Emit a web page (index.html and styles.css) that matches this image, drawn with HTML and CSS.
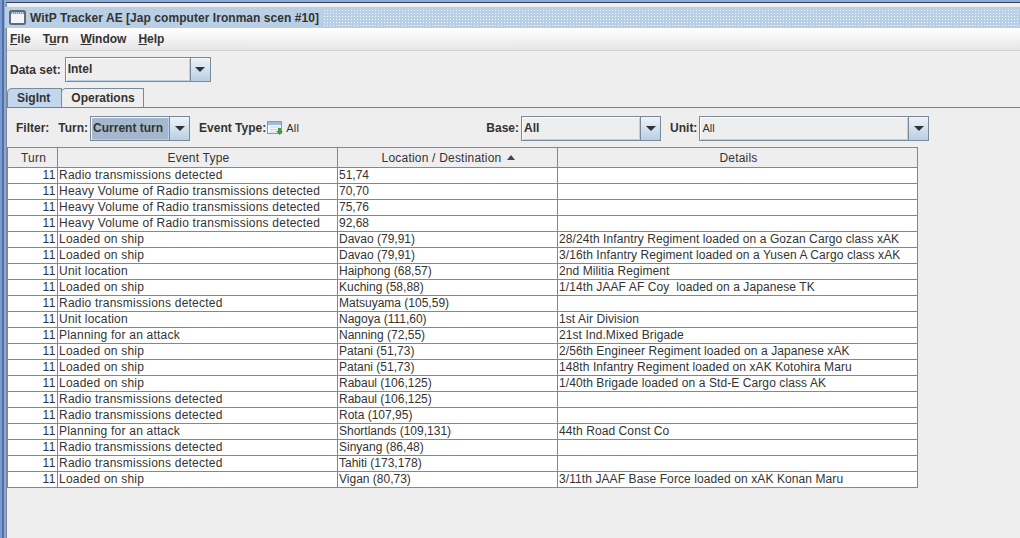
FILE: index.html
```html
<!DOCTYPE html>
<html lang="en">
<head>
    <meta charset="UTF-8">
    <title>WitP Tracker AE</title>
    <link rel="stylesheet" href="styles.css">
</head>
<body>

<div class="window">
    <div class="titlebar">
        <svg class="title-icon" width="17" height="15" viewBox="0 0 17 15">
            <rect x="1" y="1" width="15" height="13" rx="1.500" fill="#f2f4f8" stroke="#5d6b7d" stroke-width="2"/>
            <rect x="2" y="2" width="13" height="2" fill="#8a9ab0"/>
            <path d="M3 3h1M5 3h1M7 3h1M9 3h1M11 3h1M13 3h1" stroke="#fff"/>
        </svg>
        <span class="title-text">WitP Tracker AE [Jap computer Ironman scen #10]</span>
        <div class="title-dots"></div>
    </div>

    <div class="menubar">
        <span class="menu"><u>F</u>ile</span>
        <span class="menu">T<u>u</u>rn</span>
        <span class="menu"><u>W</u>indow</span>
        <span class="menu"><u>H</u>elp</span>
    </div>

    <div class="dataset">
        <span class="label">Data set:</span>
        <div class="combo combo-dataset">
            <div class="combo-value">Intel</div>
            <div class="combo-btn"><i class="arrow"></i></div>
        </div>
    </div>

    <div class="tabs">
        <div class="tab tab-active">SigInt</div>
        <div class="tab">Operations</div>
    </div>

    <div class="panel">
        <div class="filters">
            <span class="label label-filter">Filter:</span>
            <span class="label label-turn">Turn:</span>
            <div class="combo combo-turn">
                <div class="combo-value combo-selected">Current turn</div>
                <div class="combo-btn"><i class="arrow"></i></div>
            </div>
            <span class="label label-event">Event Type:</span>
            <svg class="event-icon" width="16" height="15" viewBox="0 0 16 15">
                <rect x="0.500" y="0.500" width="14" height="12" fill="#f4f8fc" stroke="#7d9cc0"/>
                <rect x="1" y="1" width="13" height="3" fill="#9dbbdc"/>
                <path d="M3 6h10M3 8.500h10M3 11h6" stroke="#c5d5e6"/>
                <path d="M11 7h3v3h2l-3.500 4-3.500-4h2z" fill="#3f9a3f"/>
            </svg>
            <span class="event-all">All</span>
            <span class="label label-base">Base:</span>
            <div class="combo combo-base">
                <div class="combo-value">All</div>
                <div class="combo-btn"><i class="arrow"></i></div>
            </div>
            <span class="label label-unit">Unit:</span>
            <div class="combo combo-unit">
                <div class="combo-value combo-plain">All</div>
                <div class="combo-btn"><i class="arrow"></i></div>
            </div>
        </div>

        <table class="grid">
            <colgroup>
                <col class="col-turn">
                <col class="col-type">
                <col class="col-loc">
                <col class="col-details">
            </colgroup>
            <thead>
                <tr>
                    <th>Turn</th>
                    <th>Event Type</th>
                    <th>Location / Destination<i class="sort"></i></th>
                    <th>Details</th>
                </tr>
            </thead>
            <tbody>
                <tr><td class="num">11</td><td class="type">Radio transmissions detected</td><td>51,74</td><td class="info"></td></tr>
                <tr><td class="num">11</td><td class="type">Heavy Volume of Radio transmissions detected</td><td>70,70</td><td class="info"></td></tr>
                <tr><td class="num">11</td><td class="type">Heavy Volume of Radio transmissions detected</td><td>75,76</td><td class="info"></td></tr>
                <tr><td class="num">11</td><td class="type">Heavy Volume of Radio transmissions detected</td><td>92,68</td><td class="info"></td></tr>
                <tr><td class="num">11</td><td class="type">Loaded on ship</td><td>Davao (79,91)</td><td class="info">28/24th Infantry Regiment loaded on a Gozan Cargo class xAK</td></tr>
                <tr><td class="num">11</td><td class="type">Loaded on ship</td><td>Davao (79,91)</td><td class="info">3/16th Infantry Regiment loaded on a Yusen A Cargo class xAK</td></tr>
                <tr><td class="num">11</td><td class="type">Unit location</td><td>Haiphong (68,57)</td><td class="info">2nd Militia Regiment</td></tr>
                <tr><td class="num">11</td><td class="type">Loaded on ship</td><td>Kuching (58,88)</td><td class="info">1/14th JAAF AF Coy  loaded on a Japanese TK</td></tr>
                <tr><td class="num">11</td><td class="type">Radio transmissions detected</td><td>Matsuyama (105,59)</td><td class="info"></td></tr>
                <tr><td class="num">11</td><td class="type">Unit location</td><td>Nagoya (111,60)</td><td class="info">1st Air Division</td></tr>
                <tr><td class="num">11</td><td class="type">Planning for an attack</td><td>Nanning (72,55)</td><td class="info">21st Ind.Mixed Brigade</td></tr>
                <tr><td class="num">11</td><td class="type">Loaded on ship</td><td>Patani (51,73)</td><td class="info">2/56th Engineer Regiment loaded on a Japanese xAK</td></tr>
                <tr><td class="num">11</td><td class="type">Loaded on ship</td><td>Patani (51,73)</td><td class="info">148th Infantry Regiment loaded on xAK Kotohira Maru</td></tr>
                <tr><td class="num">11</td><td class="type">Loaded on ship</td><td>Rabaul (106,125)</td><td class="info">1/40th Brigade loaded on a Std-E Cargo class AK</td></tr>
                <tr><td class="num">11</td><td class="type">Radio transmissions detected</td><td>Rabaul (106,125)</td><td class="info"></td></tr>
                <tr><td class="num">11</td><td class="type">Radio transmissions detected</td><td>Rota (107,95)</td><td class="info"></td></tr>
                <tr><td class="num">11</td><td class="type">Planning for an attack</td><td>Shortlands (109,131)</td><td class="info">44th Road Const Co</td></tr>
                <tr><td class="num">11</td><td class="type">Radio transmissions detected</td><td>Sinyang (86,48)</td><td class="info"></td></tr>
                <tr><td class="num">11</td><td class="type">Radio transmissions detected</td><td>Tahiti (173,178)</td><td class="info"></td></tr>
                <tr><td class="num">11</td><td class="type">Loaded on ship</td><td>Vigan (80,73)</td><td class="info">3/11th JAAF Base Force loaded on xAK Konan Maru</td></tr>
            </tbody>
        </table>
    </div>
</div>

</body>
</html>
```
FILE: styles.css
```css
html, body {
    margin: 0;
    padding: 0;
}
body {
    width: 1020px;
    height: 538px;
    overflow: hidden;
    font-family: "Liberation Sans", Arial, sans-serif;
    font-size: 12px;
    color: #333;
    background: linear-gradient(90deg, #7a9bd0 2px, #4f6fa8 2px, #4f6fa8 4px, #8fa8cf 4px);
}
.window {
    height: 536px;
    display: flex;
    flex-direction: column;
    margin-top: 2px;
    margin-left: 6px;
    background-color: #eeeeee;
    border-top: 1px solid #2f4468;
    border-left: 1px solid #7a8a99;
}
.titlebar {
    height: 21px;
    margin-top: 4px;
    display: flex;
    align-items: center;
    background-color: #b8cfe5;
    margin-left: -2px;
    padding-left: 4px;
}
.title-icon {
    flex: none;
}
.title-text {
    margin-left: 4px;
    font-weight: bold;
    letter-spacing: 0.050px;
    white-space: nowrap;
    color: #333;
}
.title-dots {
    flex: 1;
    height: 17px;
    margin-left: 4px;
    background-image: radial-gradient(#f2f6fa 35%, transparent 40%);
    background-size: 3px 3px;
}
.menubar {
    height: 22px;
    display: flex;
    align-items: center;
    gap: 13px;
    padding-left: 3px;
    font-weight: bold;
    background: linear-gradient(#ffffff, #e6e6e6);
    border-bottom: 1px solid #cfcfcf;
}
.menu {
    margin-right: -1px;
}
.dataset {
    height: 37px;
    display: flex;
    align-items: center;
    gap: 4px;
    padding-left: 3px;
}
.label {
    font-weight: bold;
    white-space: nowrap;
}
.combo {
    height: 25px;
    display: flex;
    box-sizing: border-box;
    border: 1px solid #7a8a99;
    background-color: #eeeeee;
}
.combo-value {
    flex: 1;
    padding-left: 2px;
    line-height: 23px;
    font-weight: bold;
    box-shadow: inset 1px 1px 0 #fff, inset -1px -1px 0 #b8cfe5;
}
.combo-selected {
    background-color: #a3b8cc;
}
.combo-plain {
    font-weight: normal;
    font-size: 11px;
}
.combo-btn {
    width: 19px;
    display: flex;
    align-items: center;
    justify-content: center;
    border-left: 1px solid #7a8a99;
    background: linear-gradient(#eef3f8, #b8cfe5);
}
.arrow {
    width: 0;
    height: 0;
    border-left: 5px solid transparent;
    border-right: 5px solid transparent;
    border-top: 5px solid #333;
}
.combo-dataset { width: 146px; }
.combo-turn { width: 100px; }
.combo-base { width: 140px; }
.combo-unit { width: 230px; }
.tabs {
    height: 19px;
    display: flex;
    font-weight: bold;
}
.tab {
    padding: 0 8px 0 9px;
    line-height: 18px;
    background-color: #eeeeee;
    border: 1px solid #7a8a99;
    border-bottom: none;
    border-radius: 5px 0 0 0;
    margin-right: -1px;
}
.tab-active {
    padding: 0 11px 0 9px;
    background-color: #c3d7ec;
    height: 19px;
}
.panel {
    flex: 1;
    border-top: 1px solid #6382bf;
    padding-top: 1px;
}
.filters {
    height: 38px;
    display: flex;
    align-items: center;
}
.label-filter { margin-left: 9px; }
.label-turn { margin-left: 9px; margin-right: 2px; }
.label-event { margin-left: 9px; margin-right: 1px; }
.event-icon { flex: none; }
.event-all { margin-left: 3px; font-size: 11px; letter-spacing: 0.300px; }
.label-base { margin-left: 187px; margin-right: 2px; }
.label-unit { margin-left: 9px; margin-right: 2px; }
.grid {
    table-layout: fixed;
    width: 911px;
    border-collapse: collapse;
    font-size: 12px;
    background-color: #fff;
}
.col-turn { width: 50px; }
.col-type { width: 280px; }
.col-loc { width: 220px; }
.col-details { width: 360px; }
.grid th {
    height: 19px;
    padding: 0 0 0 2px;
    font-weight: normal;
    letter-spacing: 0.200px;
    background-color: #eeeeee;
    border: 1px solid #7a8a99;
}
.grid td {
    height: 15px;
    padding: 0 0 0 1px;
    line-height: 15px;
    white-space: pre;
    overflow: hidden;
    border: 1px solid #7a8a99;
}
.grid td.num {
    text-align: right;
    padding-right: 1px;
    letter-spacing: 0.500px;
}
.grid td.type {
    letter-spacing: 0.220px;
}
.grid td.info {
    letter-spacing: 0.090px;
}
.sort {
    display: inline-block;
    width: 0;
    height: 0;
    margin-left: 6px;
    vertical-align: 2px;
    border-left: 4px solid transparent;
    border-right: 4px solid transparent;
    border-bottom: 5px solid #39485a;
}
```
